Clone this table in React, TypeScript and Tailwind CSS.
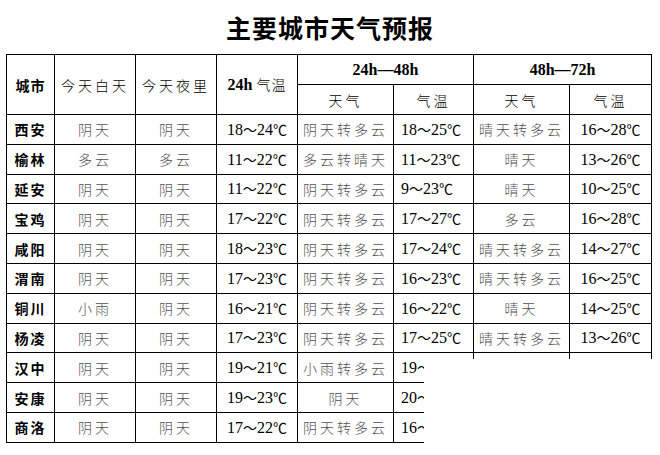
const rows: [string, string, string, string, string, string, string, string][] = [
  ['西安', '阴天', '阴天', '18～24℃', '阴天转多云', '18～25℃', '晴天转多云', '16～28℃'],
  ['榆林', '多云', '多云', '11～22℃', '多云转晴天', '11～23℃', '晴天', '13～26℃'],
  ['延安', '阴天', '阴天', '11～22℃', '阴天转多云', '9～23℃', '晴天', '10～25℃'],
  ['宝鸡', '阴天', '阴天', '17～22℃', '阴天转多云', '17～27℃', '多云', '16～28℃'],
  ['咸阳', '阴天', '阴天', '18～23℃', '阴天转多云', '17～24℃', '晴天转多云', '14～27℃'],
  ['渭南', '阴天', '阴天', '17～23℃', '阴天转多云', '16～23℃', '晴天转多云', '16～25℃'],
  ['铜川', '小雨', '阴天', '16～21℃', '阴天转多云', '16～22℃', '晴天', '14～25℃'],
  ['杨凌', '阴天', '阴天', '17～23℃', '阴天转多云', '17～25℃', '晴天转多云', '13～26℃'],
  ['汉中', '阴天', '阴天', '19～21℃', '小雨转多云', '19～22℃', '多云', '15～25℃'],
  ['安康', '阴天', '阴天', '19～23℃', '阴天', '20～24℃', '多云', '16～26℃'],
  ['商洛', '阴天', '阴天', '17～22℃', '阴天转多云', '16～23℃', '晴天', '14～25℃'],
];

const cjk = "font-['Noto_Sans_CJK_SC',sans-serif]";
const serif = "font-['Liberation_Serif','Noto_Sans_CJK_SC',serif]";

const Temp = ({ t }: { t: string }) => {
  const [a, rest] = t.split('～');
  const b = rest.replace('℃', '');
  return (
    <span className={`${serif} text-[16px] text-black`}>
      {a}
      <span className={`${cjk} text-[14px]`}>～</span>
      {b}
      <span className={`${cjk} text-[14px]`}>℃</span>
    </span>
  );
};

const Wx = ({ t }: { t: string }) => (
  <span className={`${cjk} text-[14px] font-light tracking-[3px] text-[#505050]`}>{t}</span>
);

export default function App() {
  const cell = 'border border-black text-center align-middle p-0 leading-none';
  const head = `${cell} ${cjk} text-[14px] font-light tracking-[3px] text-black`;
  return (
    <div className="relative w-[660px] h-[455px] bg-white overflow-hidden">
      <h1
        className={`h-[54px] flex items-center justify-center pt-[2px] font-['Noto_Sans_CJK_SC',serif] text-[25px] font-bold text-black tracking-[1px]`}
      >
        主要城市天气预报
      </h1>
      <table className="ml-[6px] border-collapse table-fixed w-[645px]">
        <colgroup>
          <col className="w-[48px]" />
          <col className="w-[81px]" />
          <col className="w-[81px]" />
          <col className="w-[81px]" />
          <col className="w-[96px]" />
          <col className="w-[80px]" />
          <col className="w-[96px]" />
          <col className="w-[82px]" />
        </colgroup>
        <thead>
          <tr className="h-[30px]">
            <th rowSpan={2} className={`${cell} ${cjk} text-[14px] font-bold tracking-[1px]`}>城市</th>
            <th rowSpan={2} className={head}>今天白天</th>
            <th rowSpan={2} className={head}>今天夜里</th>
            <th rowSpan={2} className={`${cell} text-[15px]`}>
              <span className={`${serif} font-bold text-[16px]`}>24h</span>{' '}
              <span className={`${cjk} font-light text-[14px] tracking-[1px]`}>气温</span>
            </th>
            <th colSpan={2} className={`${cell} ${serif} font-bold text-[16px]`}>24h—48h</th>
            <th colSpan={2} className={`${cell} ${serif} font-bold text-[16px]`}>48h—72h</th>
          </tr>
          <tr className="h-[30px]">
            <th className={head}>天气</th>
            <th className={head}>气温</th>
            <th className={head}>天气</th>
            <th className={head}>气温</th>
          </tr>
        </thead>
        <tbody>
          {rows.map((r) => (
            <tr key={r[0]} className="h-[29.8px]">
              <td className={`${cell} ${cjk} text-[14px] font-bold tracking-[2px] text-black`}>{r[0]}</td>
              <td className={cell}><Wx t={r[1]} /></td>
              <td className={cell}><Wx t={r[2]} /></td>
              <td className={cell}><Temp t={r[3]} /></td>
              <td className={cell}><Wx t={r[4]} /></td>
              <td className={`${cell} text-left pl-[7px]`}><Temp t={r[5]} /></td>
              <td className={cell}><Wx t={r[6]} /></td>
              <td className={cell}><Temp t={r[7]} /></td>
            </tr>
          ))}
        </tbody>
      </table>
      <div className="absolute left-[424px] top-[359px] right-0 bottom-0 bg-white" />
    </div>
  );
}
